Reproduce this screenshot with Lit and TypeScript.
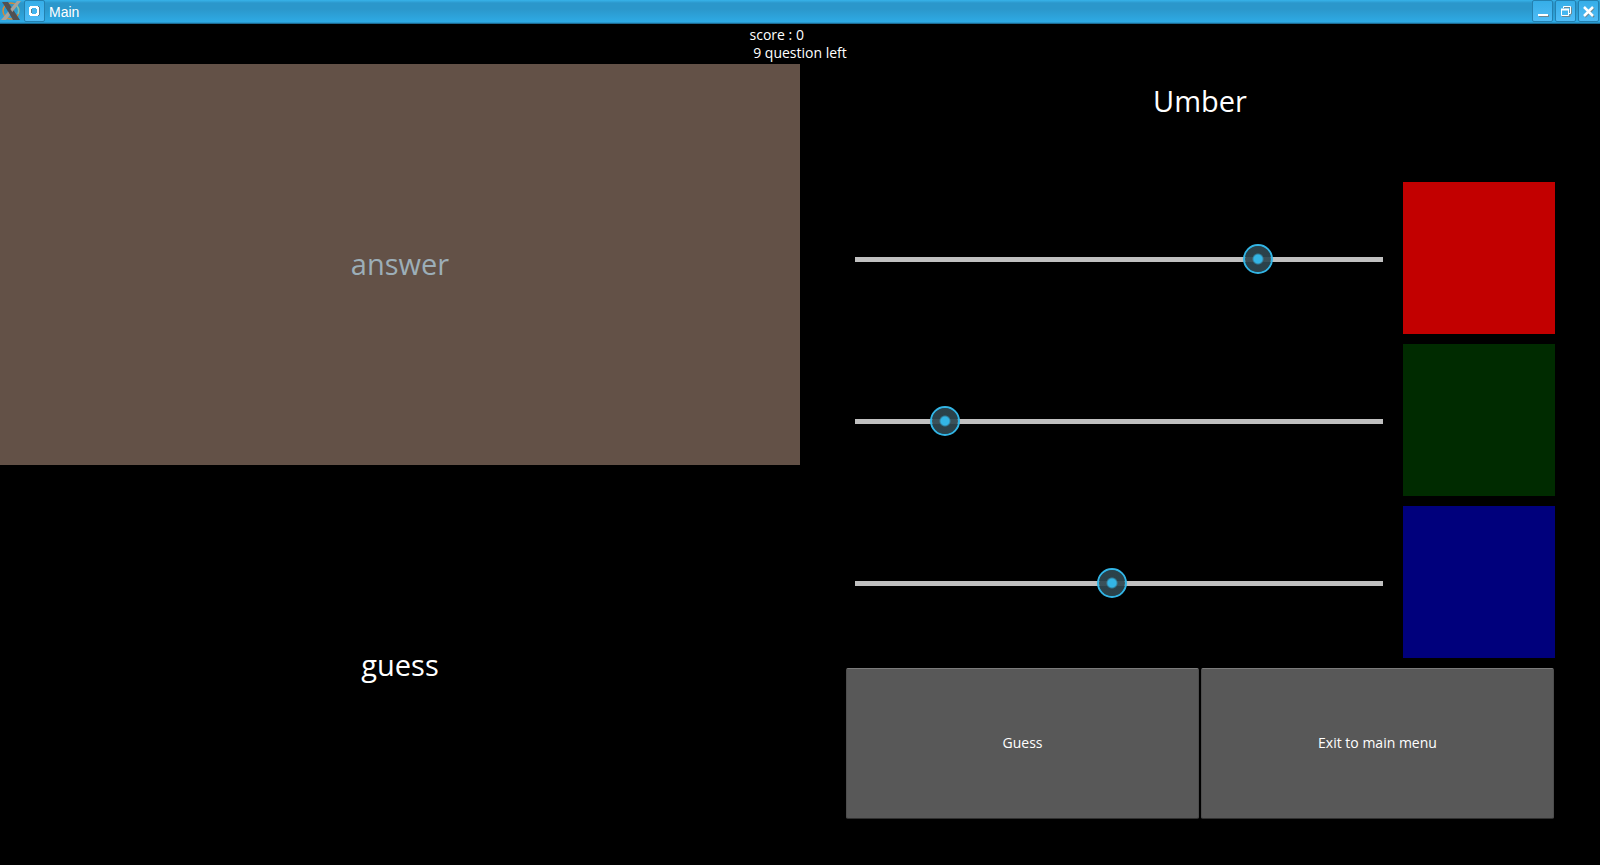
import { LitElement, html, css } from "lit";
import { customElement, state } from "lit/decorators.js";

interface Channel {
  name: string;
  value: number;
}

@customElement("window-bar")
class WindowBar extends LitElement {
  static styles = css`
    :host {
      display: flex;
      align-items: center;
      box-sizing: border-box;
      height: 24px;
      flex: none;
      padding: 0 1px 2px 0;
      background: linear-gradient(#37b3ea 0, #2b97cb 3px, #2b97cb 9px, #2eabe5 22px, #2286b8 23px, #174f6b 24px);
      color: #fff;
      font: 14px/20px "Liberation Sans", Arial, sans-serif;
    }
    .logo {
      width: 20px;
      height: 20px;
      margin: 0 3px 0 1px;
    }
    .title {
      flex: 1;
      margin: 0 0 0 4px;
      padding-top: 2px;
      font: inherit;
    }
    .tool {
      display: block;
      box-sizing: border-box;
      width: 21px;
      height: 22px;
      margin: 0;
      padding: 0;
      border: 1px solid #2481b0;
      border-radius: 2px;
      background: linear-gradient(#36aee8, #4fbcf6);
    }
    .group {
      display: flex;
      gap: 2px;
    }
    .tool svg {
      display: block;
      width: 19px;
      height: 20px;
    }
  `;

  render() {
    return html`
      <svg class="logo" viewBox="0 0 20 20" aria-hidden="true">
        <circle cx="10" cy="10" r="8" fill="none" stroke="#d98a35" stroke-width="1.5" />
        <path d="M14 3a8 8 0 0 1 3 10" fill="none" stroke="#69c5c4" stroke-width="1.5" />
        <path d="M1 1h6l12 18h-6z" fill="#515153" />
        <path d="M16 0h4L5 19H0z" fill="#a8a39b" />
        <path d="M4 5l3-1 9 15h-4z" fill="#515153" />
      </svg>
      <button class="tool" aria-label="Window menu">
        <svg viewBox="0 0 19 20" fill="none" aria-hidden="true">
          <path d="M7 6h6v1h1v6h-1v1H7v-1H6V7h1z" stroke="#567f91" stroke-width="2" />
          <path d="M6 6h6v1h1v6h-1v1H6v-1H5V7h1z" stroke="#fff" stroke-width="2" />
          <path d="M7 7h4v6H7z" fill="#43b5ef" />
        </svg>
      </button>
      <h1 class="title">Main</h1>
      <div class="group">
        <button class="tool" aria-label="Minimize">
          <svg viewBox="0 0 19 20" aria-hidden="true">
            <path d="M6 15h10" stroke="#6d8791" stroke-width="2" />
            <path d="M5 14h10" stroke="#fff" stroke-width="2" />
          </svg>
        </button>
        <button class="tool" aria-label="Restore">
          <svg viewBox="0 0 19 20" fill="none" aria-hidden="true">
            <path d="M8.5 8V6.500h7v6.500h-2M6 15.500h8V9" stroke="#6d8791" />
            <path d="M7.500 7V5.500h7v7h-2M5.500 8.500h7v6h-7z" stroke="#fff" />
            <path d="M5 8.500h8" stroke="#fff" stroke-width="2" />
          </svg>
        </button>
        <button class="tool" aria-label="Close">
          <svg viewBox="0 0 19 20" fill="none" aria-hidden="true">
            <path d="M6 7l9 9M15 7l-9 9" stroke="#6d8791" stroke-width="2" />
            <path d="M5 6l9 9M14 6l-9 9" stroke="#fff" stroke-width="2.500" />
          </svg>
        </button>
      </div>
    `;
  }
}

@customElement("app-root")
class AppRoot extends LitElement {
  @state() private channels: Channel[] = [
    { name: "Red", value: 194.5 },
    { name: "Green", value: 43.5 },
    { name: "Blue", value: 124 },
  ];

  static styles = css`
    :host {
      display: flex;
      flex-direction: column;
      min-height: 100vh;
      background: #000;
      color: #fff;
      font: 14px/18px "Open Sans", "Noto Sans", sans-serif;
    }
    .status {
      display: flex;
      justify-content: center;
      box-sizing: border-box;
      height: 40px;
      padding-top: 2px;
      white-space: pre;
    }
    .status p {
      margin: 0;
    }
    .game {
      flex: 1;
      display: grid;
      grid-template-columns: 1fr 1fr;
    }
    .colors {
      display: grid;
      grid-template-rows: 1fr 1fr;
    }
    .color {
      display: grid;
      place-items: center;
      font-size: 29px;
      line-height: 40px;
    }
    .answer {
      background: #635147;
      color: #9caeb8;
    }
    .panel {
      display: grid;
      grid-template-rows: 108px repeat(3, 152px) 1fr;
      gap: 10px;
      padding: 0 45px 46px 40px;
    }
    .name {
      margin: 0;
      padding: 17px 0 0 5px;
      font-size: 29px;
      font-weight: 400;
      line-height: 40px;
      text-align: center;
    }
    .channel {
      display: grid;
      grid-template-columns: 1fr 152px;
      gap: 5px;
      align-items: center;
    }
    .swatch {
      height: 100%;
    }
    .slider {
      appearance: none;
      -webkit-appearance: none;
      display: block;
      width: 100%;
      height: 30px;
      margin: 2px 0 0;
      background: none;
    }
    .slider::-webkit-slider-runnable-track {
      height: 5px;
      background: linear-gradient(#c0c0c0, #c0c0c0) center / calc(100% - 30px) 100% no-repeat;
    }
    .slider::-webkit-slider-thumb {
      appearance: none;
      -webkit-appearance: none;
      box-sizing: border-box;
      width: 30px;
      height: 30px;
      margin-top: -13px;
      border: 2px solid #33b5e5;
      border-radius: 50%;
      background: radial-gradient(circle, #33b5e5 4px, rgba(47, 71, 80, 0.92) 6px) padding-box;
    }
    .actions {
      display: grid;
      grid-template-columns: 1fr 1fr;
      gap: 2px;
      padding: 0 1px 0 6px;
    }
    .action {
      padding: 0 0 2px;
      border: 1px solid #4d4d4d;
      border-top-color: #7b7b7b;
      border-bottom-color: #303030;
      border-radius: 2px;
      background: #585858;
      color: #fff;
      font: inherit;
    }
  `;

  private change(index: number, event: Event) {
    const value = Number((event.target as HTMLInputElement).value);
    this.channels = this.channels.map((c, i) => (i === index ? { ...c, value } : c));
  }

  private shade(index: number) {
    return `rgb(${this.channels.map((c, i) => (i === index ? Math.floor(c.value) : 0)).join(",")})`;
  }

  render() {
    return html`
      <window-bar></window-bar>
      <header class="status"><p>score : 0
 9 question left </p></header>
      <main class="game">
        <section class="colors">
          <div class="color answer">answer</div>
          <div class="color">guess</div>
        </section>
        <section class="panel">
          <h2 class="name">Umber</h2>
          ${this.channels.map(
            (c, i) => html`
              <div class="channel">
                <input
                  class="slider"
                  type="range"
                  min="0"
                  max="255"
                  step="any"
                  aria-label=${c.name}
                  .value=${String(c.value)}
                  @input=${(e: Event) => this.change(i, e)}
                />
                <div class="swatch" style="background:${this.shade(i)}"></div>
              </div>
            `,
          )}
          <div class="actions">
            <button class="action">Guess</button>
            <button class="action">Exit to main menu</button>
          </div>
        </section>
      </main>
    `;
  }
}
